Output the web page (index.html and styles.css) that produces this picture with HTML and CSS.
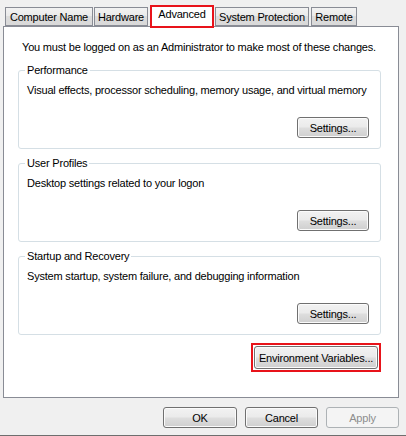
FILE: index.html
```html
<!DOCTYPE html>
<html>
<head>
<meta charset="utf-8">
<link rel="stylesheet" href="styles.css">
</head>
<body>
<div class="dialog">
  <div class="tabs">
    <div class="tab t1">Computer Name</div>
    <div class="tab t2">Hardware</div>
    <div class="tab selected">Advanced</div>
    <div class="tab t4">System Protection</div>
    <div class="tab t5">Remote</div>
  </div>
  <div class="panel">
    <p class="intro">You must be logged on as an Administrator to make most of these changes.</p>
    <fieldset class="group">
      <legend>Performance</legend>
      <p class="desc">Visual effects, processor scheduling, memory usage, and virtual memory</p>
      <div class="row"><button class="btn settings">Settings...</button></div>
    </fieldset>
    <fieldset class="group">
      <legend>User Profiles</legend>
      <p class="desc">Desktop settings related to your logon</p>
      <div class="row"><button class="btn settings">Settings...</button></div>
    </fieldset>
    <fieldset class="group">
      <legend>Startup and Recovery</legend>
      <p class="desc">System startup, system failure, and debugging information</p>
      <div class="row"><button class="btn settings">Settings...</button></div>
    </fieldset>
    <div class="envrow"><span class="highlight"><button class="btn env">Environment Variables...</button></span></div>
  </div>
  <div class="footer">
    <button class="btn foot ok">OK</button>
    <button class="btn foot">Cancel</button>
    <button class="btn foot disabled">Apply</button>
  </div>
</div>
</body>
</html>
```
FILE: styles.css
```css
* { box-sizing: border-box; }
html, body { margin: 0; padding: 0; }
body {
  background: #f0f0f0;
  font-family: "Liberation Sans", Arial, sans-serif;
  font-size: 11px;
  letter-spacing: -0.2px;
  line-height: 13px;
  color: #000;
}
.dialog {
  width: 406px;
  height: 436px;
  border-bottom: 1px solid #6e6e6e;
  display: flex;
  flex-direction: column;
}
.tabs {
  display: flex;
  align-items: flex-end;
  height: 27px;
  padding-left: 5px;
  margin-bottom: -1px;
  position: relative;
  z-index: 1;
}
.tab {
  height: 19px;
  border: 1px solid #898c95;
  background: linear-gradient(#f2f2f2, #e9e9e9 50%, #dcdcdc 50%, #d9d9d9);
  padding: 3px 0 0;
  text-align: center;
  margin-right: 1px;
  margin-bottom: 1px;
  white-space: nowrap;
}
.t1 { width: 88px; }
.t2 { width: 54px; margin-right: 3px; }
.tab.selected {
  width: 62px;
  height: 21px;
  margin-bottom: 0;
  background: #fff;
  border-bottom: none;
  padding-top: 1px;
  outline: 2px solid #e8131a;
  outline-offset: -1px;
  margin-right: 2px;
}
.t4 { width: 94px; margin-right: 2px; }
.t5 { width: 46px; }
.panel {
  margin-left: 3px;
  width: 396px;
  height: 372px;
  background: #fff;
  border: 1px solid #898c95;
  padding: 14px 17px 0 14px;
}
.intro {
  margin: 0 0 10px 4px;
  white-space: nowrap;
}
.group {
  margin: 0 0 8px 0;
  width: 363px;
  height: 85px;
  border: 1px solid #d5dfe5;
  border-radius: 3px;
  padding: 0 11px 0 8px;
}
.group legend {
  padding: 0 2px;
  margin-left: -2px;
  line-height: 13px;
}
.desc { margin: 7px 0 0 0; white-space: nowrap; }
.row {
  display: flex;
  justify-content: flex-end;
  margin-top: 20px;
}
.btn {
  font-family: "Liberation Sans", Arial, sans-serif;
  font-size: 11px;
  letter-spacing: -0.2px;
  color: #000;
  border: 1px solid #707070;
  border-radius: 3px;
  background: linear-gradient(#f2f2f2, #ebebeb 45%, #dddddd 55%, #cfcfcf);
  box-shadow: inset 0 0 0 1px #fbfbfb;
  padding: 0;
  height: 21px;
}
.settings { width: 72px; }
.envrow {
  display: flex;
  justify-content: flex-end;
  margin-top: 5px;
}
.highlight {
  display: flex;
  border: 2px solid #e8131a;
  padding: 1px;
}
.env {
  width: 124px;
  height: 23px;
}
.footer {
  display: flex;
  justify-content: flex-end;
  gap: 8px;
  padding: 9px 7px 0 0;
}
.foot { width: 73px; }
.ok { width: 74px; }
.disabled {
  color: #8d8d8d;
  border-color: #adb2b5;
  background: #f4f4f4;
  box-shadow: none;
}
```
